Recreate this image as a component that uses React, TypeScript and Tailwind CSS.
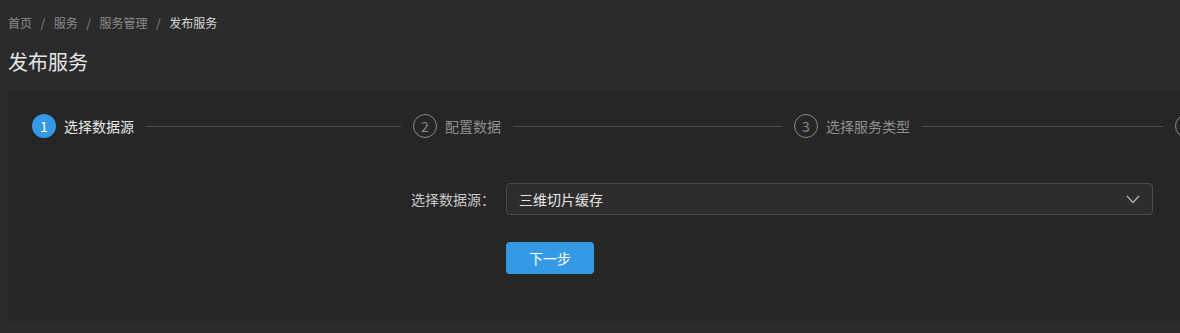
import React from 'react';

const font = { fontFamily: '"Noto Sans CJK SC", "Noto Sans", sans-serif' };

const steps = ['选择数据源', '配置数据', '选择服务类型', '发布'];

export default function App() {
  return (
    <div className="w-[1180px] h-[333px] overflow-hidden bg-[#2b2b2b] text-[#dcdcdc]" style={font}>
      {/* Breadcrumb */}
      <div className="flex items-center h-[46px] px-2 text-xs text-[#8c8c8c]">
        <span>首页</span>
        <span className="mx-[8.5px]">/</span>
        <span>服务</span>
        <span className="mx-[8.5px]">/</span>
        <span>服务管理</span>
        <span className="mx-[8.5px]">/</span>
        <span className="text-[#d8d8d8]">发布服务</span>
      </div>
      <h1 className="px-2 text-xl leading-[32px] text-[#e6e6e6]">发布服务</h1>

      {/* Panel */}
      <div className="mt-3 ml-2 w-[1600px] h-[231px] bg-[#262626] px-6 pt-6">
        <div className="flex">
          {steps.map((s, i) => (
            <div key={s} className="flex items-center w-[381px] shrink-0">
              <div
                className={
                  i === 0
                    ? 'w-6 h-6 rounded-full bg-[#349ae6] text-white text-sm flex items-center justify-center shrink-0'
                    : 'w-6 h-6 rounded-full border border-[#8a8a8a] text-[#8a8a8a] text-sm flex items-center justify-center shrink-0'
                }
              >
                {i + 1}
              </div>
              <span className={i === 0 ? 'ml-2 text-sm text-[#e8e8e8]' : 'ml-2 text-sm text-[#8f8f8f]'}>{s}</span>
              {i < steps.length - 1 && <div className="flex-1 h-px bg-[#4a4a4a] mx-3" />}
            </div>
          ))}
        </div>

        {/* Form */}
        <div className="mt-[45px] flex items-center">
          <label className="w-[474px] pr-[11px] text-right text-sm text-[#c8c8c8]">选择数据源：</label>
          <div className="w-[647px] h-8 rounded border border-[#4a4a4a] bg-[#2d2d2d] flex items-center justify-between pl-3 pr-3">
            <span className="text-sm text-[#e6e6e6]">三维切片缓存</span>
            <svg width="14" height="9" viewBox="0 0 14 9" fill="none">
              <polyline points="1,1 7,7.5 13,1" stroke="#b0b0b0" strokeWidth="1.3" />
            </svg>
          </div>
        </div>
        <div className="mt-[27px] ml-[474px]">
          <button className="w-[88px] h-8 rounded bg-[#349ae6] text-white text-sm">下一步</button>
        </div>
      </div>
    </div>
  );
}
